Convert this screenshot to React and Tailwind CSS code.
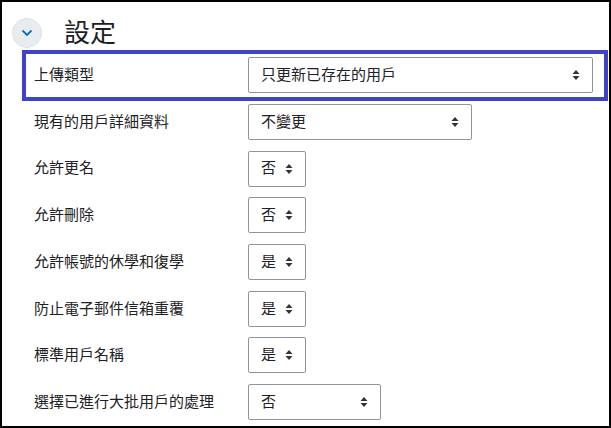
const font = { fontFamily: '"Liberation Sans", "Noto Sans CJK TC", sans-serif' };

const Arrows = () => (
  <svg width="8" height="12" viewBox="0 0 8 12" className="shrink-0">
    <path d="M4 1 L7.5 5 H0.5 Z M4 11 L7.5 7 H0.5 Z" fill="#333" />
  </svg>
);

const Select = ({ value, w }) => (
  <div className={`h-9 ${w} border border-[#8f959e] rounded-[2px] bg-white flex items-center justify-between pl-3 pr-3 text-[15px] text-[#1d2125]`}>
    <span>{value}</span>
    <Arrows />
  </div>
);

const rows = [
  ["現有的用戶詳細資料", "不變更", "w-[224px]"],
  ["允許更名", "否", "w-[58px]"],
  ["允許刪除", "否", "w-[58px]"],
  ["允許帳號的休學和復學", "是", "w-[58px]"],
  ["防止電子郵件信箱重覆", "是", "w-[58px]"],
  ["標準用戶名稱", "是", "w-[58px]"],
  ["選擇已進行大批用戶的處理", "否", "w-[133px]"],
];

export default function App() {
  return (
    <div style={font} className="w-[611px] h-[428px] border-2 border-black bg-white overflow-hidden text-[#1d2125]">
      <div className="flex items-center pl-[10px] pt-[13px] h-[48px]">
        <div className="w-[30px] h-[30px] rounded-full bg-[#e9ecef] border border-[#dee2e6] flex items-center justify-center">
          <svg width="12" height="8" viewBox="0 0 12 8">
            <path d="M1.5 1.5 L6 6 L10.5 1.5" stroke="#0f6cbf" strokeWidth="1.8" fill="none" />
          </svg>
        </div>
        <h2 className="ml-[22px] text-[26px] leading-none text-[#1d2125]">設定</h2>
      </div>
      <div className="ml-[20px] w-[586px] border-[4px] border-[#3f43c9] pt-[3px] pb-[4px] pl-[8px] flex items-center text-[15px]">
        <div className="w-[214px]">上傳類型</div>
        <Select value="只更新已存在的用戶" w="w-[345px]" />
      </div>
      <div className="mt-[3px] pl-[32px] flex flex-col gap-[10.7px]">
        {rows.map(([l, v, w]) => (
          <div key={l} className="flex items-center text-[15px]">
            <div className="w-[214px]">{l}</div>
            <Select value={v} w={w} />
          </div>
        ))}
      </div>
    </div>
  );
}
